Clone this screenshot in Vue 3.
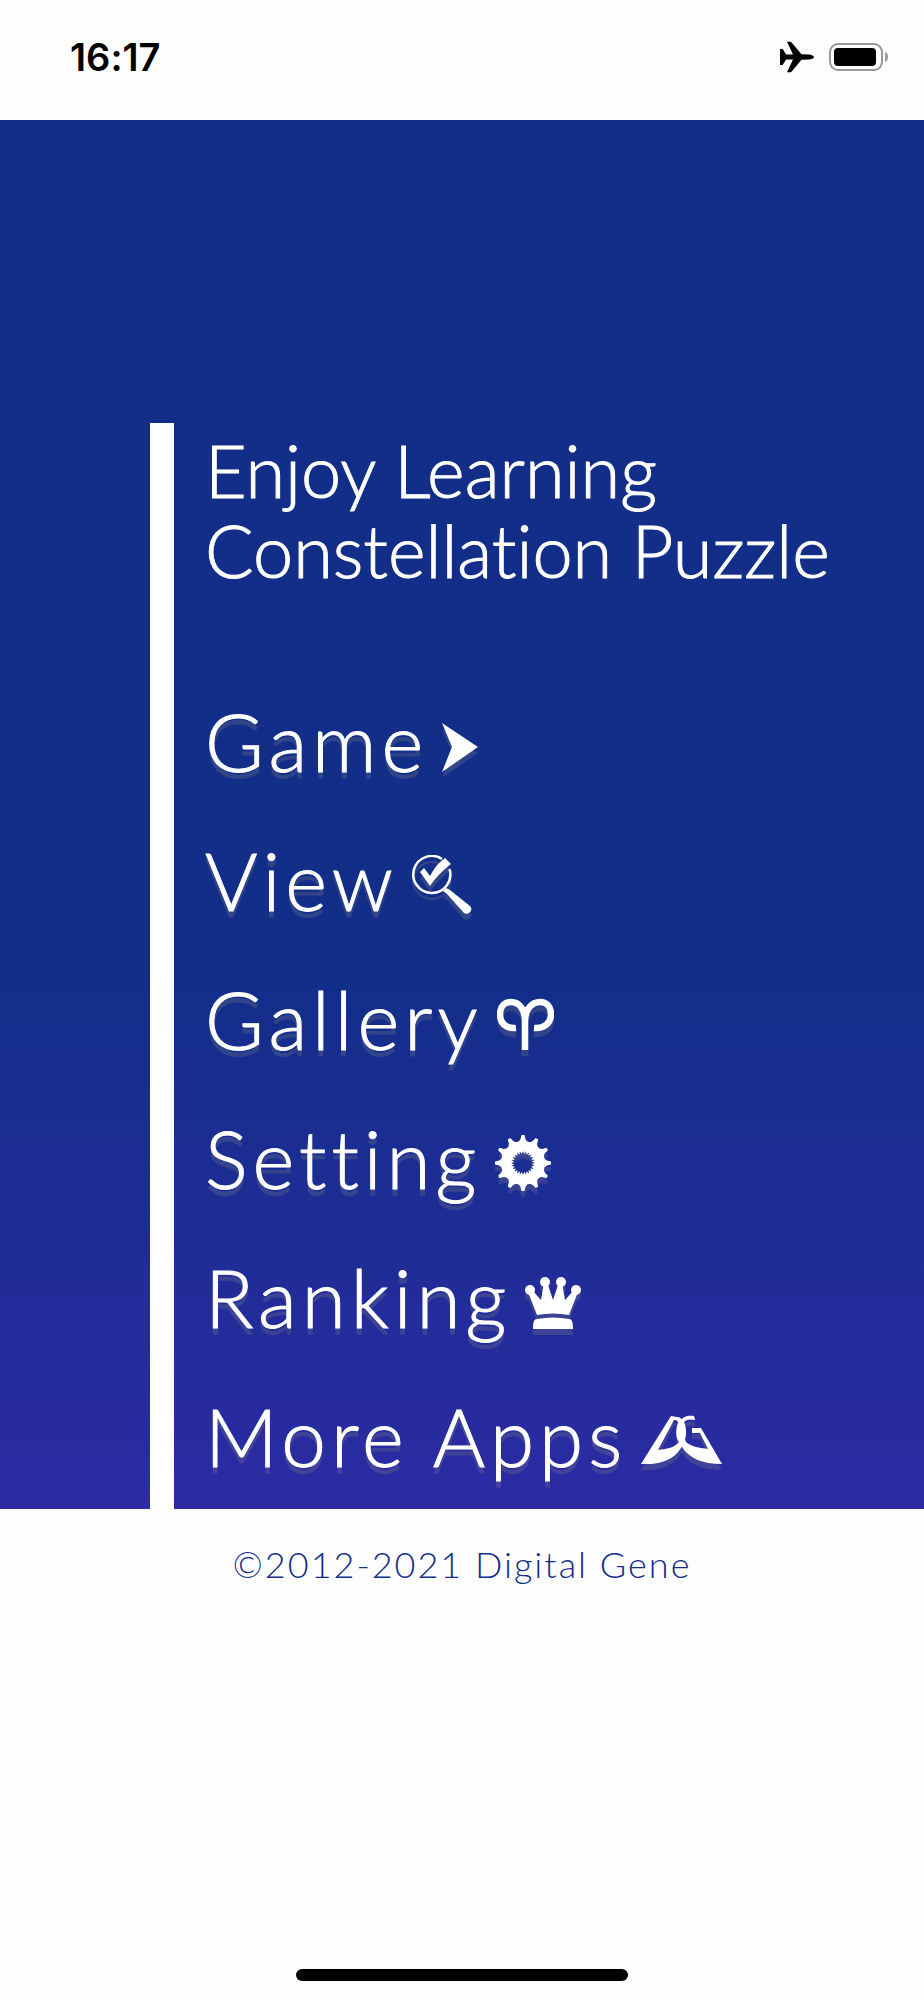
<template>
  <div class="screen">
    <header class="status-bar">
      <time class="clock">16:17</time>
      <div class="status-icons">
        <svg class="plane" viewBox="0 0 34 32" aria-label="Airplane mode">
          <path d="M0 8h2.600l3.600 5.500h6.800L7 .8h4l10.500 12.400L29 13.400c2.600.2 5 1.400 5 2.600s-2.400 2.400-5 2.600l-7.500.2L11 31.200H7l6-12.700H6.200L2.600 24H0z" />
        </svg>
        <svg class="battery" viewBox="0 0 60 28" aria-label="Battery">
          <rect x="1" y="1" width="52" height="26" rx="8" fill="none" stroke="#999" stroke-width="2" />
          <rect x="5" y="5" width="42" height="18" rx="4" />
          <path d="M56 9c4 1 4 9 0 10z" fill="#999" />
        </svg>
      </div>
    </header>

    <main class="panel">
      <div class="content">
        <h1 class="title">Enjoy Learning<br />Constellation Puzzle</h1>
        <nav>
          <ul class="menu">
            <li v-for="item in items" :key="item.label">
              <button type="button" class="menu-item">
                <span>{{ item.label }}</span>
                <svg class="menu-icon" :width="item.width" height="60" :viewBox="`0 0 ${item.width} 60`" aria-hidden="true">
                  <path v-if="item.icon === 'arrow'" d="M0 7L36 31L0 56L10 31z" />
                  <g v-else-if="item.icon === 'search'">
                    <path d="M30 4A18.500 18.500 0 1 0 37.500 14" fill="none" stroke="#fff" stroke-width="2.500" />
                    <path d="M8 17l4-4 6 8C22 13 27 7 33 3l6 6C31 15 24 22 18 31z" />
                    <path d="M31 36l3-3 4 2 20 16c4 4-2 10-6 7L35 39z" />
                  </g>
                  <path
                    v-else-if="item.icon === 'aries'"
                    d="M19 34C9 35 3 29 3 20C3 12 8 8 14 8C22 8 28 15 28 27V56M37 34C47 35 54 29 54 20C54 12 49 8 43 8C35 8 28 15 28 27"
                    fill="none"
                    stroke="#fff"
                    stroke-width="6.500"
                  />
                  <path v-else-if="item.icon === 'gear'" :d="gearPath" fill-rule="evenodd" />
                  <g v-else-if="item.icon === 'crown'">
                    <circle cx="5" cy="18" r="5" />
                    <circle cx="20" cy="10" r="5" />
                    <circle cx="36" cy="10" r="5" />
                    <circle cx="51" cy="18" r="5" />
                    <path d="M3 20l5-1 8 9 3-18h3l6 18 6-18h3l3 18 8-9 5 1-9 23Q28 40 12 43z" />
                    <path d="M8 57C8 50 9 47 12 47Q28 44 44 47C47 47 48 50 48 57z" />
                  </g>
                  <g v-else>
                    <path d="M0 53L30 5L36 6C39 6 41 8 43 11C47 20 45 29 40 37C33 49 18 54 0 53zM17 39L33 9C36 9 37 10 37 12C34 20 35 27 38 31C33 37 25 38 17 39z" fill-rule="evenodd" />
                    <path d="M39 10C42 5 48 4 53 5L54 9C49 8 46 8 43 11C40 18 42 27 46 32C52 36 60 37 67 38L59 22H51V17H60L81 53C61 53 48 47 41 36C35 28 35 18 39 10z" />
                  </g>
                </svg>
              </button>
            </li>
          </ul>
        </nav>
      </div>
    </main>

    <footer class="footer">©2012-2021 Digital Gene</footer>
    <div class="home-indicator"></div>
  </div>
</template>

<script setup>
const items = [
  { label: 'Game', icon: 'arrow', width: 36 },
  { label: 'View', icon: 'search', width: 60 },
  { label: 'Gallery', icon: 'aries', width: 57 },
  { label: 'Setting', icon: 'gear', width: 56 },
  { label: 'Ranking', icon: 'crown', width: 56 },
  { label: 'More Apps', icon: 'gene', width: 81 },
];

const ring = (points) => {
  const coords = points.map(([deg, r]) => {
    const a = (deg * Math.PI) / 180;
    return `${(28 + r * Math.sin(a)).toFixed(2)} ${(30 - r * Math.cos(a)).toFixed(2)}`;
  });
  return `M${coords.join('L')}z`;
};

// outer teeth, then the toothed hole in the middle
const outer = Array.from({ length: 12 }, (_, i) => i * 30).flatMap((a) => [
  [a - 11, 22],
  [a - 6, 24],
  [a - 3, 28],
  [a + 3, 28],
  [a + 6, 24],
  [a + 11, 22],
]);
const inner = Array.from({ length: 24 }, (_, i) => i * 15).flatMap((a) => [
  [a, 12],
  [a + 7, 9],
]);
const gearPath = ring(outer) + ring(inner);
</script>

<style>
body {
  margin: 0;
  background: #fdfdfd;
}
</style>

<style scoped>
.screen {
  display: flex;
  flex-direction: column;
  min-height: 100vh;
  box-sizing: border-box;
  font-family: Lato, "Liberation Sans", sans-serif;
  font-weight: 300;
  font-variant-ligatures: none;
}
.status-bar {
  display: flex;
  align-items: center;
  justify-content: space-between;
  height: 120px;
  box-sizing: border-box;
  padding: 0 35px 6px 70px;
}
.clock {
  font-family: Inter, sans-serif;
  font-size: 38px;
  font-weight: 600;
  color: #000;
}
.status-icons {
  display: flex;
  align-items: center;
  gap: 15px;
}
.plane {
  width: 34px;
  height: 32px;
}
.battery {
  width: 60px;
  height: 28px;
}
.panel {
  padding: 303px 0 0 150px;
  color: #fff;
  background: linear-gradient(#122e89, #122e89 61%, #2c2ba4);
}
.content {
  padding: 7px 0 3px 31px;
  border-left: 24px solid #fff;
}
.title {
  margin: 0 0 82px;
  font-size: 72px;
  font-weight: 300;
  line-height: 80px;
  -webkit-text-stroke: 1px #fff;
}
.menu {
  margin: 0;
  padding: 0;
  list-style: none;
}
.menu-item {
  display: block;
  padding: 0;
  border: 0;
  background: none;
  color: #fff;
  font: inherit;
  font-variant-ligatures: none;
  font-size: 80px;
  line-height: 139px;
  letter-spacing: 5px;
  white-space: nowrap;
  -webkit-text-stroke: 1px #fff;
  cursor: pointer;
  filter: drop-shadow(0 6px 0 rgba(128, 128, 128, 0.27));
}
.menu-icon {
  margin-left: 14px;
  vertical-align: -4px;
  fill: #fff;
}
.footer {
  padding-top: 33px;
  font-size: 36px;
  line-height: 44px;
  letter-spacing: 2px;
  text-align: center;
  color: #122e89;
}
.home-indicator {
  width: 36%;
  height: 12px;
  margin: auto auto 19px;
  border-radius: 6px;
  background: #000;
}
</style>
